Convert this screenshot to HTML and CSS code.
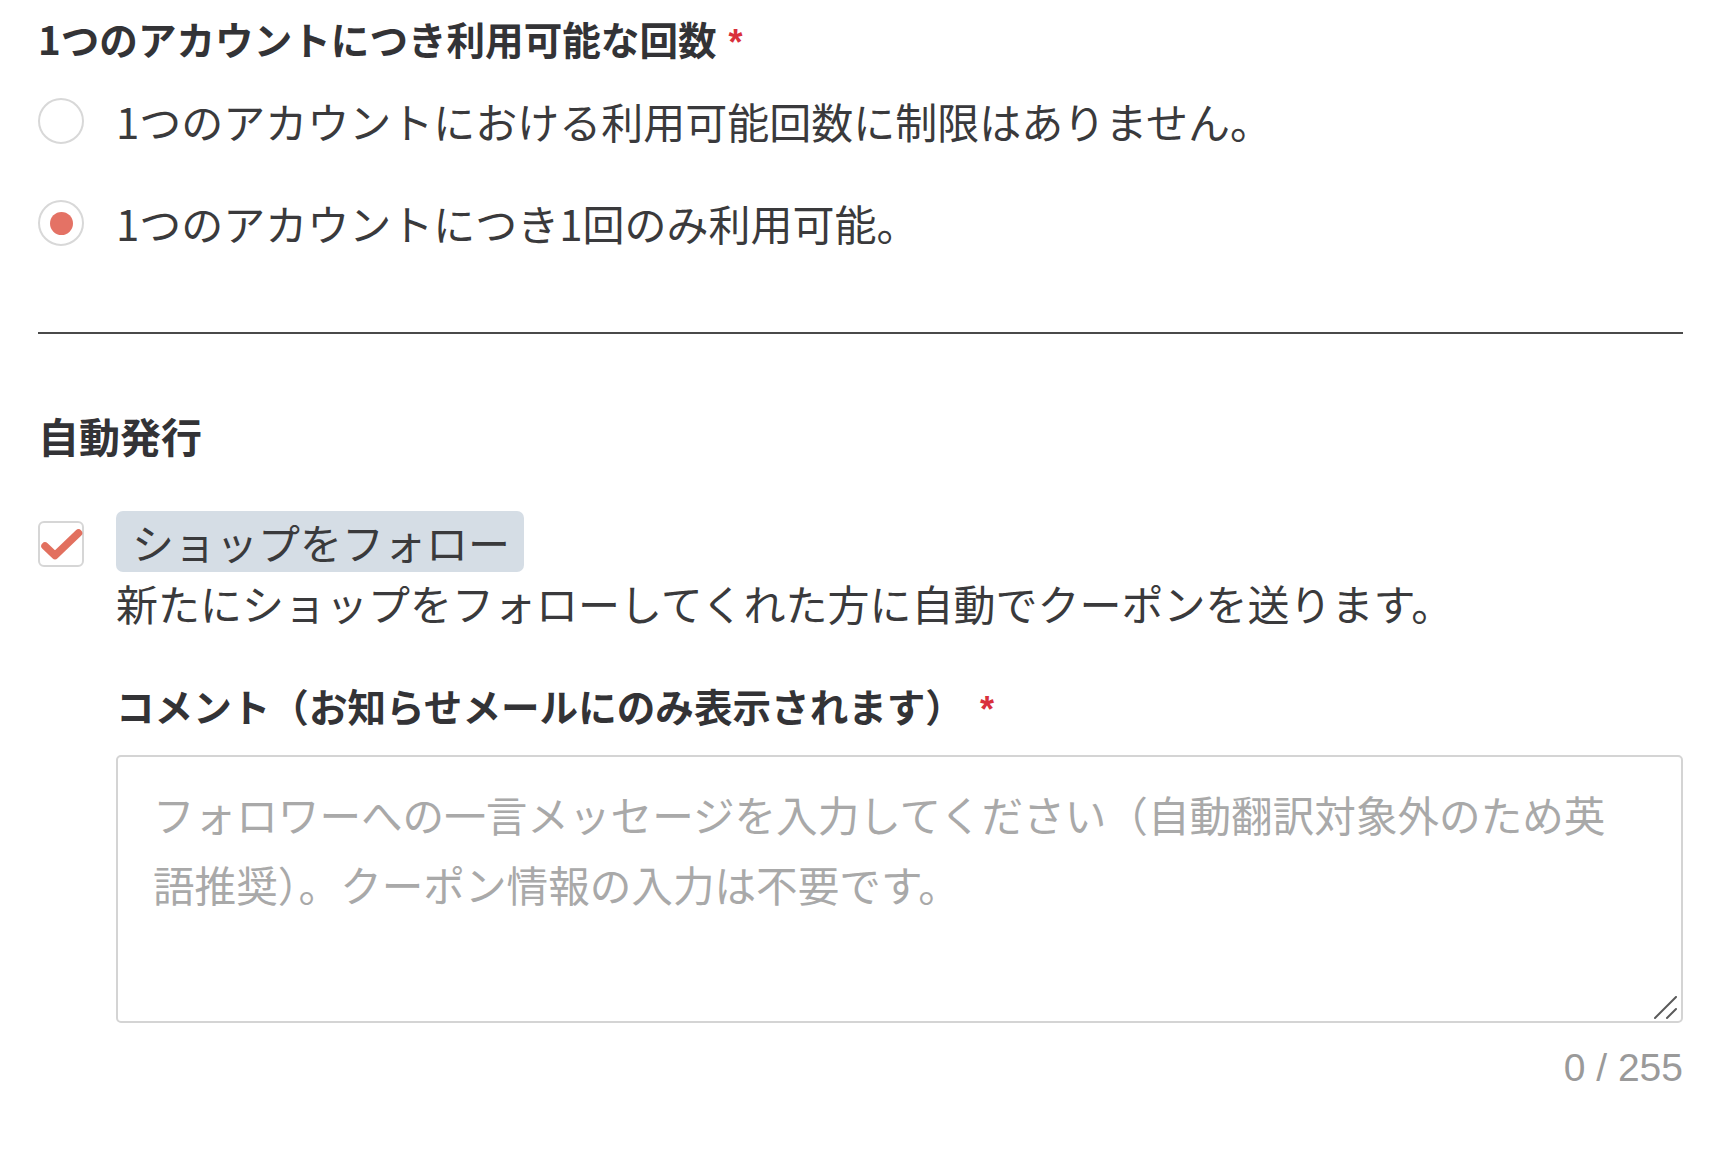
FILE: index.html
```html
<!DOCTYPE html>
<html lang="ja">
<head>
<meta charset="utf-8">
<title>クーポン設定</title>
<link rel="stylesheet" href="styles.css">
</head>
<body>
<div class="page">
  <section class="field">
    <div class="field-label">1つのアカウントにつき利用可能な回数<span class="req req-title">*</span></div>
    <div class="radio-group">
      <label class="radio-row">
        <span class="radio"></span>
        <span class="option-text">1つのアカウントにおける利用可能回数に制限はありません。</span>
      </label>
      <label class="radio-row">
        <span class="radio checked"><span class="radio-dot"></span></span>
        <span class="option-text">1つのアカウントにつき1回のみ利用可能。</span>
      </label>
    </div>
  </section>

  <hr class="divider">

  <section class="auto">
    <h2 class="section-title">自動発行</h2>
    <div class="check-row">
      <span class="checkbox">
        <svg width="46" height="46" viewBox="0 0 46 46" aria-hidden="true">
          <path d="M7 25 L17 34.5 L40.5 12" fill="none" stroke="#e2705f" stroke-width="7.5" stroke-linecap="round" stroke-linejoin="round"/>
        </svg>
      </span>
      <div class="check-body">
        <span class="chip">ショップをフォロー</span>
        <p class="desc">新たにショップをフォローしてくれた方に自動でクーポンを送ります。</p>
        <div class="comment-label">コメント（お知らせメールにのみ表示されます）<span class="req req-comment">*</span></div>
        <div class="textarea-wrap">
          <textarea class="textarea" placeholder="フォロワーへの一言メッセージを入力してください（自動翻訳対象外のため英語推奨）。クーポン情報の入力は不要です。"></textarea>
          <svg class="grip" width="24" height="24" viewBox="0 0 24 24" aria-hidden="true">
            <path d="M1 22 L22 1 M13 22 L22 13" stroke="#5a5a5a" stroke-width="2" stroke-linecap="round"/>
          </svg>
        </div>
        <div class="counter">0 / 255</div>
      </div>
    </div>
  </section>
</div>
</body>
</html>
```

FILE: styles.css
```css
html, body {
  margin: 0;
  padding: 0;
  background: #ffffff;
}

body {
  font-family: "Noto Sans CJK JP", "Noto Sans", sans-serif;
  color: #333336;
}

.page {
  padding: 11px 45px 40px 38px;
}

.field-label {
  font-size: 38.6px;
  font-weight: 700;
  line-height: 54px;
  display: flex;
  align-items: flex-start;
}

.req {
  color: #d9303c;
  font-family: "Liberation Sans", sans-serif;
  font-weight: 700;
  font-size: 36px;
  line-height: 40px;
  margin-top: 12px;
}

.req-title {
  margin-left: 12px;
}

.req-comment {
  margin-left: 16px;
}

.radio-group {
  display: flex;
  flex-direction: column;
  gap: 40px;
  margin-top: 25px;
}

.radio-row {
  display: flex;
  align-items: center;
  gap: 32px;
  height: 62px;
}

.radio {
  width: 46px;
  height: 46px;
  box-sizing: border-box;
  border: 2px solid #d8d8d8;
  border-radius: 50%;
  display: flex;
  align-items: center;
  justify-content: center;
  flex: none;
}

.radio-dot {
  width: 23px;
  height: 23px;
  border-radius: 50%;
  background: #e47265;
}

.option-text {
  font-size: 42px;
  line-height: 62px;
  color: #3a3a3c;
}

.divider {
  margin: 78px 0 0 0;
  border: 0;
  height: 2px;
  background: #4a4a4a;
}

.section-title {
  margin: 73px 0 0 0;
  font-size: 41px;
  font-weight: 700;
  line-height: 56px;
}

.check-row {
  display: flex;
  gap: 32px;
  margin-top: 48px;
}

.checkbox {
  width: 46px;
  height: 46px;
  box-sizing: border-box;
  border: 2px solid #d6d6d6;
  border-radius: 6px;
  margin-top: 10px;
  flex: none;
  position: relative;
}

.checkbox svg {
  position: absolute;
  left: -2px;
  top: -2px;
}

.check-body {
  flex: 1;
  display: flex;
  flex-direction: column;
  align-items: flex-start;
}

.chip {
  display: inline-block;
  background: #d5dde5;
  border-radius: 7px;
  padding: 0 14px 0 16px;
  font-size: 42px;
  line-height: 61px;
  height: 61px;
  color: #3a3a3c;
}

.desc {
  margin: 0;
  font-size: 42px;
  line-height: 62px;
  color: #3a3a3c;
}

.comment-label {
  margin-top: 44px;
  font-size: 38.6px;
  font-weight: 700;
  line-height: 54px;
  display: flex;
  align-items: flex-start;
}

.textarea-wrap {
  position: relative;
  align-self: stretch;
  margin-top: 23px;
}

.textarea {
  display: block;
  width: 100%;
  height: 268px;
  box-sizing: border-box;
  border: 2px solid #d4d4d4;
  border-radius: 5px;
  padding: 22px 40px 20px 35px;
  font-family: "Noto Sans CJK JP", "Noto Sans", sans-serif;
  font-size: 41.6px;
  line-height: 70px;
  color: #333;
  resize: none;
  outline: none;
  background: #fff;
}

.textarea::placeholder {
  color: #a9a9a9;
}

.grip {
  position: absolute;
  right: 5px;
  bottom: 3px;
}

.counter {
  align-self: flex-end;
  margin-top: 22px;
  font-family: "Liberation Sans", Arial, sans-serif;
  font-size: 39px;
  line-height: 46px;
  color: #9a9a9a;
}
```
